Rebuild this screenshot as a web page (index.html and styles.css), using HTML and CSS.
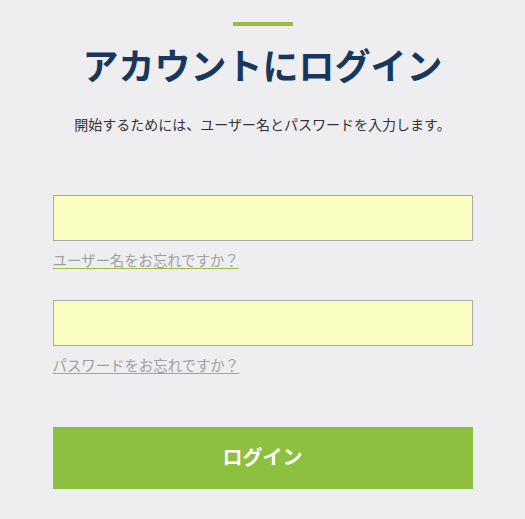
FILE: index.html
```html
<!DOCTYPE html>
<html lang="ja">
<head>
<meta charset="utf-8">
<link rel="stylesheet" href="styles.css">
</head>
<body>
<main class="login">
  <div class="accent"></div>
  <h1 class="title">アカウントにログイン</h1>
  <p class="lead">開始するためには、ユーザー名とパスワードを入力します。</p>
  <form class="form">
    <div class="field">
      <input class="input" type="text">
      <a class="forgot" href="#">ユーザー名をお忘れですか？</a>
    </div>
    <div class="field">
      <input class="input" type="password">
      <a class="forgot" href="#">パスワードをお忘れですか？</a>
    </div>
    <button class="submit" type="button">ログイン</button>
  </form>
</main>
</body>
</html>
```
FILE: styles.css
```css
html, body {
  margin: 0;
  padding: 0;
  background: #eeeef0;
}
body {
  font-family: "Noto Sans CJK JP", "Noto Sans", sans-serif;
  color: #333;
}
.login {
  width: 420px;
  margin: 0 auto;
  padding-top: 22px;
  display: flex;
  flex-direction: column;
  align-items: center;
}
.accent {
  width: 60px;
  height: 4px;
  background: #9bbb3a;
}
.title {
  margin: 12px 0 0;
  font-size: 36px;
  line-height: 52px;
  font-weight: 700;
  color: #17375e;
}
.lead {
  margin: 24px 0 0;
  font-size: 14px;
  line-height: 20px;
  color: #333;
}
.form {
  width: 100%;
  margin-top: 61px;
  display: flex;
  flex-direction: column;
}
.field {
  display: flex;
  flex-direction: column;
  align-items: flex-start;
  margin-bottom: 30px;
}
.input {
  box-sizing: border-box;
  width: 100%;
  height: 46px;
  margin: 0;
  border: 1px solid #a9a9b0;
  background: #fafdc2;
  outline: none;
}
.forgot {
  margin-top: 9px;
  font-size: 14.4px;
  line-height: 20px;
  color: #a0a0a0;
  text-decoration: underline;
  text-decoration-color: #9bbb3a;
  text-underline-offset: 2px;
}
.submit {
  margin-top: 22px;
  height: 62px;
  width: 100%;
  border: none;
  padding: 0 0 3px;
  background: #8dc03f;
  color: #fff;
  font-family: "Noto Sans CJK JP", "Noto Sans", sans-serif;
  font-size: 20px;
  font-weight: 700;
}
```
